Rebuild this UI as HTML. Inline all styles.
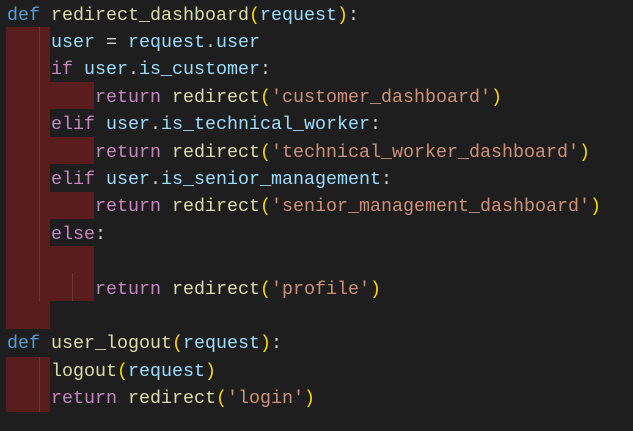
<!DOCTYPE html><html><head><style>
html,body{margin:0;padding:0;background:#1e1e1e;width:633px;height:431px;overflow:hidden}
.r{position:absolute;background:#5a1d1d}
.g{position:absolute;width:1px;background:#6a3535}
pre{position:absolute;left:7px;top:1.5px;margin:0;font-family:"Liberation Mono",monospace;font-size:18.33px;line-height:27.4px;color:#d4d4d4}
.k{color:#569cd6}.f{color:#dcdcaa}.v{color:#9cdcfe}.p{color:#ffd700}.c{color:#c586c0}.s{color:#ce9178}
</style></head><body>
<div class="r" style="left:6px;top:27px;width:44px;height:302px"></div>
<div class="r" style="left:50px;top:82px;width:44px;height:27px"></div>
<div class="r" style="left:50px;top:137px;width:44px;height:27px"></div>
<div class="r" style="left:50px;top:192px;width:44px;height:27px"></div>
<div class="r" style="left:50px;top:246px;width:44px;height:55px"></div>
<div class="r" style="left:6px;top:357px;width:44px;height:55px"></div>
<div class="g" style="left:39px;top:27px;height:274px"></div>
<div class="g" style="left:72px;top:273px;height:28px"></div>
<div class="g" style="left:39px;top:357px;height:55px"></div>
<pre><span class="k">def</span> <span class="f">redirect_dashboard</span><span class="p">(</span><span class="v">request</span><span class="p">)</span>:
    <span class="v">user</span> = <span class="v">request</span>.<span class="v">user</span>
    <span class="c">if</span> <span class="v">user</span>.<span class="v">is_customer</span>:
        <span class="c">return</span> <span class="f">redirect</span><span class="p">(</span><span class="s">'customer_dashboard'</span><span class="p">)</span>
    <span class="c">elif</span> <span class="v">user</span>.<span class="v">is_technical_worker</span>:
        <span class="c">return</span> <span class="f">redirect</span><span class="p">(</span><span class="s">'technical_worker_dashboard'</span><span class="p">)</span>
    <span class="c">elif</span> <span class="v">user</span>.<span class="v">is_senior_management</span>:
        <span class="c">return</span> <span class="f">redirect</span><span class="p">(</span><span class="s">'senior_management_dashboard'</span><span class="p">)</span>
    <span class="c">else</span>:

        <span class="c">return</span> <span class="f">redirect</span><span class="p">(</span><span class="s">'profile'</span><span class="p">)</span>

<span class="k">def</span> <span class="f">user_logout</span><span class="p">(</span><span class="v">request</span><span class="p">)</span>:
    <span class="f">logout</span><span class="p">(</span><span class="v">request</span><span class="p">)</span>
    <span class="c">return</span> <span class="f">redirect</span><span class="p">(</span><span class="s">'login'</span><span class="p">)</span>
</pre>
</body></html>
